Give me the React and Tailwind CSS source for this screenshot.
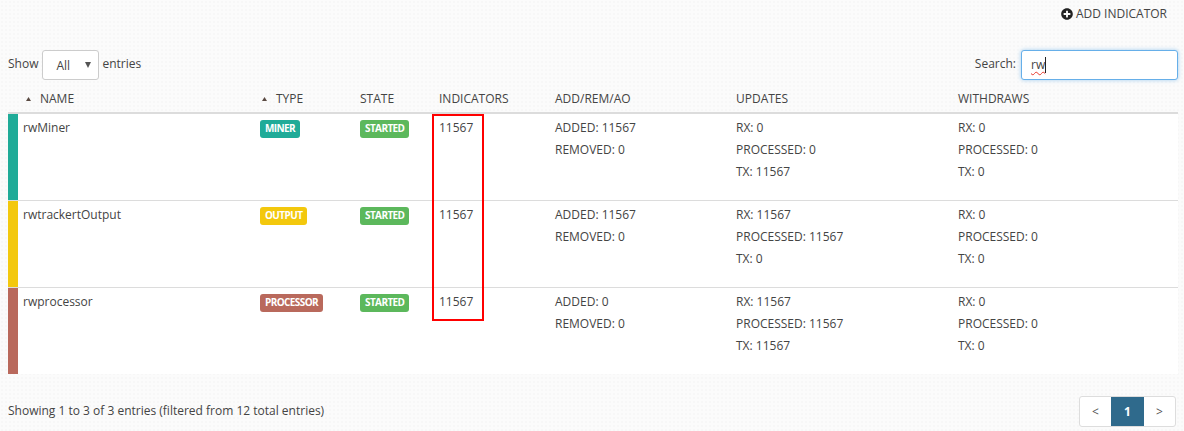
import React from 'react';
import { FaPlusCircle } from 'react-icons/fa';

const rows = [
    { name: 'rwMiner', type: 'MINER', bar: 'bg-[#1fab98]', added: 11567, removed: 0, updates: [0, 0, 11567], withdraws: [0, 0, 0] },
    { name: 'rwtrackertOutput', type: 'OUTPUT', bar: 'bg-[#f3c80d]', added: 11567, removed: 0, updates: [11567, 11567, 0], withdraws: [0, 0, 0] },
    { name: 'rwprocessor', type: 'PROCESSOR', bar: 'bg-[#b9695c]', added: 0, removed: 0, updates: [11567, 11567, 11567], withdraws: [0, 0, 0] },
];

const columns = 'grid grid-cols-[252px_100px_79px_116px_181px_222px_1fr]';

const SortArrow = () => (
    <svg width="5" height="4" viewBox="0 0 5 4" className="mr-[9px] mt-px shrink-0">
        <polygon points="2.5,0 5,4 0,4" fill="#5a4a42" />
    </svg>
);

const Badge = ({ className, children }) => (
    <span className={`inline-block h-[18px] rounded-[3px] px-[5px] text-[10px] tracking-[-0.6px] leading-[16px] font-bold text-white ${className}`}>
        {children}
    </span>
);

const Lines = ({ items }) => (
    <div className="flex flex-col gap-[4px] pt-[5px]">
        {items.map((line) => (
            <div key={line} className="h-[18px] leading-[18px]">{line}</div>
        ))}
    </div>
);

const badgeColors = { MINER: 'bg-[#1fab98]', OUTPUT: 'bg-[#f3c80d]', PROCESSOR: 'bg-[#b9695c]' };

export default function App() {
    return (
        <div className="relative h-[431px] w-[1184px] overflow-hidden bg-[#fbfbfb] bg-[radial-gradient(#f7f7f7_1px,transparent_1px)] bg-[length:4px_4px] text-[12px] text-[#444] font-['Open_Sans',sans-serif]">
            <div className="flex h-[50px] items-start justify-end pr-[17px] pt-[5px]">
                <a className="flex h-[18px] items-center gap-[3px] text-[12px] leading-[18px] text-[#444]">
                    <FaPlusCircle className="text-[12px] text-[#222]" />
                    ADD INDICATOR
                </a>
            </div>

            <div className="flex h-[30px] items-center justify-between pl-[8px] pr-[6px]">
                <div className="flex items-center">
                    <span className="pb-[2px]">Show</span>
                    <div className="relative ml-[4px] flex h-[30px] w-[57px] items-center rounded-[3px] border border-[#ccc] bg-white pl-[13px]">
                        <span className="pt-[2px]">All</span>
                        <span className="absolute right-[7px] top-[11px] h-0 w-0 border-x-[3.5px] border-t-[6px] border-x-transparent border-t-[#555]" />
                    </div>
                    <span className="ml-[3px] pb-[2px]">entries</span>
                </div>
                <div className="flex items-center gap-[5px]">
                    <span className="pb-[2px]">Search:</span>
                    <div className="flex h-[30px] w-[157px] items-center rounded-[3px] border border-[#66afe9] bg-white pl-[9px] shadow-[0_0_4px_rgba(102,175,233,0.6)]">
                        <span className="underline decoration-wavy decoration-[#e8392c] decoration-1 underline-offset-2">rw</span>
                        <span className="h-[16px] w-px bg-[#222]" />
                    </div>
                </div>
            </div>

            <div className="mx-[8px] mt-[7px] w-[1170px]">
                <div className={`${columns} h-[27px] items-center border-b-2 border-[#dcdcdc] pb-[2px] leading-[18px]`}>
                    <div className="flex items-center pl-[18px]"><SortArrow />NAME</div>
                    <div className="flex items-center pl-[2px]"><SortArrow />TYPE</div>
                    <div>STATE</div>
                    <div>INDICATORS</div>
                    <div>ADD/REM/AO</div>
                    <div>UPDATES</div>
                    <div>WITHDRAWS</div>
                </div>
                {rows.map((row, i) => (
                    <div key={row.name} className={`${columns} bg-white ${i < 2 ? 'h-[87px] border-b border-[#dcdcdc]' : 'h-[86px]'}`}>
                        <div className="flex">
                            <div className={`w-[10px] shrink-0 ${row.bar}`} />
                            <div className="pl-[5px] pt-[5px] leading-[18px]">{row.name}</div>
                        </div>
                        <div className="pt-[6px] leading-none"><Badge className={badgeColors[row.type]}>{row.type}</Badge></div>
                        <div className="pt-[6px] leading-none"><Badge className="bg-[#5cb85c]">STARTED</Badge></div>
                        <div className="pt-[5px] leading-[18px]">11567</div>
                        <Lines items={[`ADDED: ${row.added}`, `REMOVED: ${row.removed}`]} />
                        <Lines items={[`RX: ${row.updates[0]}`, `PROCESSED: ${row.updates[1]}`, `TX: ${row.updates[2]}`]} />
                        <Lines items={[`RX: ${row.withdraws[0]}`, `PROCESSED: ${row.withdraws[1]}`, `TX: ${row.withdraws[2]}`]} />
                    </div>
                ))}
            </div>

            <div className="flex items-center justify-between pl-[8px] pr-[8px] pt-[22px]">
                <span className="pb-[2px] leading-[18px]">Showing 1 to 3 of 3 entries (filtered from 12 total entries)</span>
                <div className="flex h-[31px] w-[97px] overflow-hidden rounded-[3px] border border-[#ddd] bg-white">
                    <span className="flex w-[31px] items-center justify-center text-[#555]">&lt;</span>
                    <span className="flex w-[33px] items-center justify-center bg-[#2f6a8c] font-bold text-white">1</span>
                    <span className="flex w-[31px] items-center justify-center text-[#555]">&gt;</span>
                </div>
            </div>

            {/* red highlight drawn over the indicators column */}
            <div className="absolute left-[432px] top-[114px] h-[207px] w-[52px] border-2 border-[#f00]" />
        </div>
    );
}
